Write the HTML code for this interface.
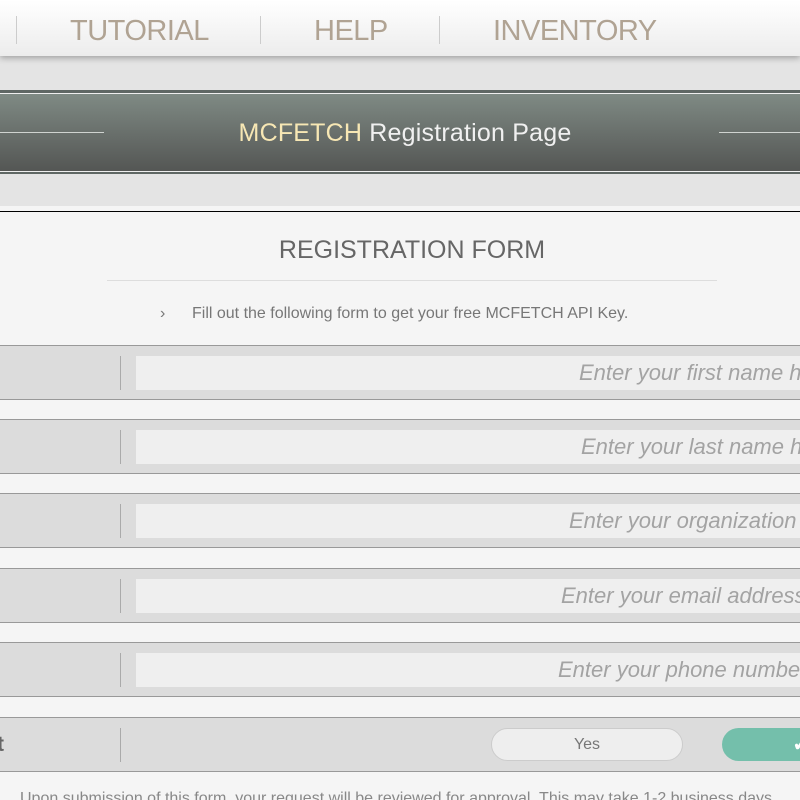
<!DOCTYPE html>
<html><head><style>
html,body{margin:0;width:800px;height:800px;overflow:hidden}
body{background:#e4e4e4;font-family:"Liberation Sans",sans-serif;position:relative}
.nav{position:absolute;left:0;top:0;width:800px;height:56px;background:linear-gradient(#fff,#ececec);box-shadow:0 2px 6px rgba(0,0,0,.3)}
.nav span{position:absolute;top:15px;font-size:29px;color:#b0a393;letter-spacing:-0.5px}
.nav i{position:absolute;top:16px;width:1px;height:28px;background:#ccc}
.ban{position:absolute;left:0;top:90px;width:800px;height:84px;background:#5f6764}
.ban .in{position:absolute;left:0;top:3px;width:800px;height:77px;border-top:1px solid #eee;border-bottom:1px solid #eee;background:linear-gradient(#7f8a84,#545654)}
.ban .t{position:absolute;width:810px;text-align:center;top:25px;font-size:25px;color:#f0f0f0;letter-spacing:0.2px}
.ban .l{position:absolute;top:38px;height:1px;background:#cfd3d0}
.panel{position:absolute;left:0;top:211px;width:800px;height:588px;overflow:hidden;background:#f5f5f5;border-top:1px solid #000}
h1{position:absolute;top:24px;width:824px;text-align:center;margin:0;font-weight:normal;font-size:25px;color:#666}
.hr{position:absolute;left:107px;top:68px;width:610px;height:1px;background:#ddd}
.sub{position:absolute;top:93px;left:160px;font-size:16px;color:#777}
.row{position:absolute;left:0;width:800px;height:53px;overflow:hidden;background:#dcdcdc;border-top:1px solid #999;border-bottom:1px solid #999}
.row .d{position:absolute;left:120px;top:10px;width:1px;height:34px;background:#aaa}
.row .f{position:absolute;left:136px;top:10px;width:664px;height:34px;background:#efefef}
.row .p{position:absolute;top:14px;font-size:22px;font-style:italic;color:#a3a3a3;white-space:nowrap}
.yes{position:absolute;left:491px;top:10px;width:190px;height:31px;border:1px solid #ccc;border-radius:17px;background:#eee;text-align:center;line-height:31px;font-size:16px;color:#777}
.no{position:absolute;left:722px;top:10px;width:120px;height:33px;border-radius:17px;background:#74bfab}
.bt{position:absolute;top:578px;left:20px;font-size:16px;color:#888;white-space:nowrap}
</style></head><body>
<div class="nav">
<i style="left:16px"></i><span style="left:70px">TUTORIAL</span>
<i style="left:260px"></i><span style="left:314px">HELP</span>
<i style="left:439px"></i><span style="left:493px">INVENTORY</span>
</div>
<div class="ban"><div class="in"><div class="l" style="left:0;width:104px"></div><div class="l" style="left:719px;width:81px"></div>
<div class="t"><span style="color:#f7e7b4">MCFETCH</span> Registration Page</div></div></div>
<div style="position:absolute;left:0;top:206px;width:800px;height:5px;background:#f5f5f5"></div>
<div class="panel">
<h1>REGISTRATION FORM</h1><div class="hr"></div>
<div class="sub">›&nbsp;&nbsp;&nbsp;&nbsp;&nbsp;&nbsp;Fill out the following form to get your free MCFETCH API Key.</div>
<div class="row" style="top:133px"><div class="d"></div><div class="f"></div><div class="p" style="left:579px">Enter your first name here</div></div>
<div class="row" style="top:207px"><div class="d"></div><div class="f"></div><div class="p" style="left:581px">Enter your last name here</div></div>
<div class="row" style="top:281px"><div class="d"></div><div class="f"></div><div class="p" style="left:569px">Enter your organization name</div></div>
<div class="row" style="top:356px"><div class="d"></div><div class="f"></div><div class="p" style="left:561px">Enter your email address</div></div>
<div class="row" style="top:430px"><div class="d"></div><div class="f"></div><div class="p" style="left:558px">Enter your phone number</div></div>
<div class="row" style="top:505px"><div class="d"></div><span style="position:absolute;left:-3px;top:15px;font-size:21px;font-weight:bold;color:#666">t</span><div class="yes">Yes</div><div class="no"><span style="position:absolute;left:70px;top:3px;color:#fff;font-size:22px;font-weight:bold">✓</span></div></div>
<div class="bt">Upon submission of this form, your request will be reviewed for approval. This may take 1-2 business days.</div>
</div>
</body></html>
